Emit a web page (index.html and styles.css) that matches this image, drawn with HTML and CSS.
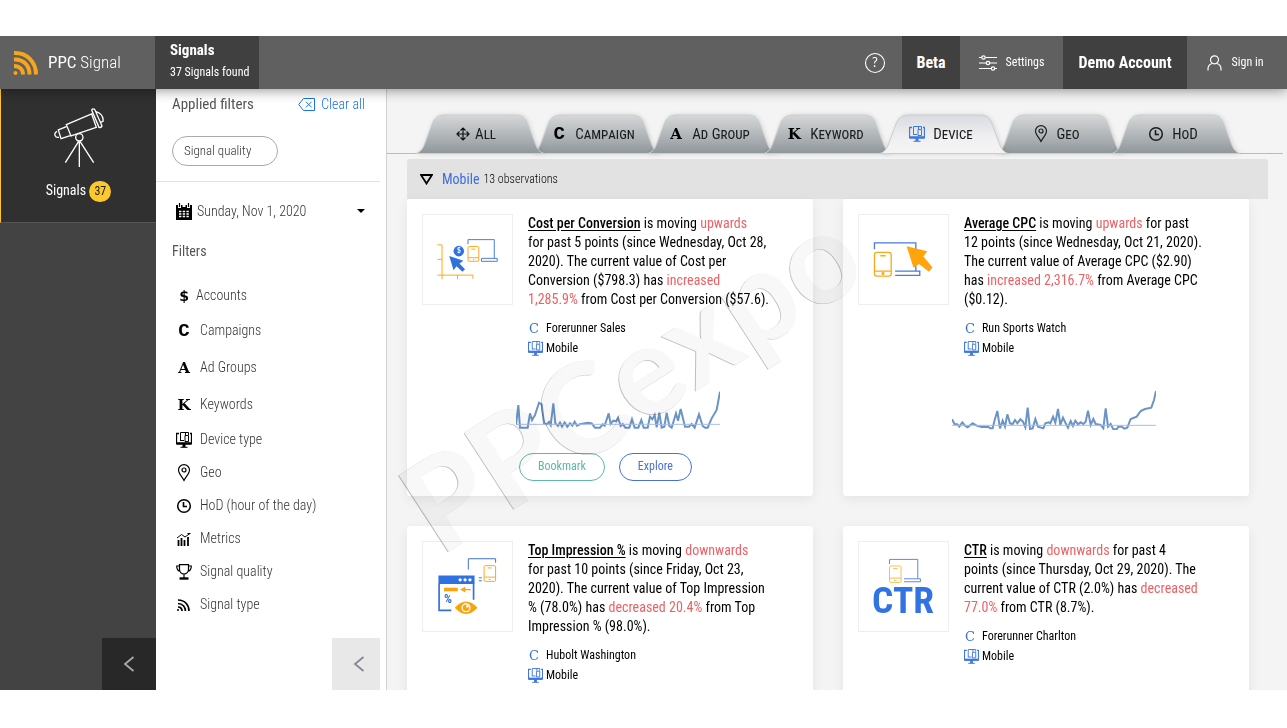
FILE: index.html
```html
<!DOCTYPE html>
<html lang="en">
<head>
<meta charset="utf-8">
<title>PPC Signal</title>
<link rel="stylesheet" href="styles.css">
</head>
<body>
<svg class="defs" aria-hidden="true">
  <defs>
    <linearGradient id="tab-fill" x1="0" y1="0" x2="0" y2="1"><stop offset="0" stop-color="#d6d8d9"/><stop offset="1" stop-color="#8f979b"/></linearGradient>
    <linearGradient id="tab-active" x1="0" y1="0" x2="0" y2="1"><stop offset="0" stop-color="#d9dbe1"/><stop offset=".6" stop-color="#f0f0f2"/><stop offset="1" stop-color="#f4f4f4"/></linearGradient>
    <symbol id="tab" viewBox="0 0 116 38" preserveAspectRatio="none" overflow="visible"><path d="M-4 38.500Q2 37 5 28L12 9Q15 0 24 0H97Q105 0 108 9L115 28Q118 37 124 38.500Z"/></symbol>
    <symbol id="device" viewBox="0 0 16 16"><g fill="none" stroke="currentColor"><path d="M3 1.500H.5V11.500H15.500V1.500H14" stroke-width="1.300"/><path d="M4.500 9V.5H9.500V3M4.500 8.500H8M9 3.500H12.500V9.500H9ZM8.500 .5H12.500V3"/><path d="M.5 11.500H15.500" stroke-width="2.400"/><path d="M8 12V15" stroke-width="3"/><path d="M4.500 15.300H11.500"/></g></symbol>
    <symbol id="pin" viewBox="0 0 14 18"><g fill="none" stroke="currentColor" stroke-width="1.200"><path d="M7 16.500C5 12.500 1.500 9.500 1.500 6a5.500 5.300 0 0 1 11 0C12.500 9.500 9 12.500 7 16.500Z"/><circle cx="7" cy="6" r="2"/></g></symbol>
    <symbol id="clock" viewBox="0 0 16 16"><circle cx="8" cy="8" r="6.300" fill="none" stroke="currentColor" stroke-width="1.500"/><path d="M7.500 4V8.500H11" fill="none" stroke="currentColor" stroke-width="1.600"/></symbol>
    <symbol id="chev" viewBox="0 0 12 18"><path d="M10.500 2 2 9l8.500 7" fill="none" stroke="currentColor" stroke-width="1.800"/></symbol>
  </defs>
</svg>

<div class="app">
  <header class="header">
    <div class="brand">
      <svg width="26" height="26" viewBox="0 0 26 26" fill="none" stroke="#f9a51a" stroke-width="4"><path d="M1 3C14 2.500 23 12 23 24.500M1 9.500C10.500 9 16.500 15.500 16.500 24.500M1 16C6.500 16 10 19.500 10 24.500"/><circle cx="2.500" cy="23" r="2" fill="#f9a51a" stroke="none"/></svg>
      <span><b>PPC</b> Signal</span>
    </div>
    <div class="page-name"><strong>Signals</strong><small>37 Signals found</small></div>
    <nav class="top-nav">
      <button class="help" aria-label="Help"><svg width="22" height="22" viewBox="0 0 22 22"><circle cx="11" cy="11" r="9.500" fill="none" stroke="#fff" stroke-width="1.100"/><text x="11" y="15" text-anchor="middle" fill="#fff" class="q">?</text></svg></button>
      <button class="dark beta">Beta</button>
      <button class="settings"><svg width="18" height="16" viewBox="0 0 18 16" fill="none" stroke="#fff" stroke-width="1.200"><path d="M0 2.500H2.500M6.500 2.500H18M0 8H7M11 8H18M0 13.500H12M16 13.500H18"/><circle cx="4.500" cy="2.500" r="1.700"/><circle cx="9" cy="8" r="1.700"/><circle cx="14" cy="13.500" r="1.700"/></svg>Settings</button>
      <button class="dark demo">Demo Account</button>
      <button class="signin"><svg width="15" height="16" viewBox="0 0 15 16" fill="none" stroke="#fff" stroke-width="1.200"><circle cx="7.500" cy="4.800" r="4"/><path d="M1 15.500V14C1 11 3 9 5.500 8.500M14 15.500V14C14 11 12 9 9.500 8.500"/></svg>Sign in</button>
    </nav>
  </header>

  <div class="body">
    <aside class="rail">
      <a class="rail-item" href="#">
        <svg width="50" height="60" viewBox="0 0 150 180" fill="none" stroke="#fff" stroke-width="4"><path d="M37 50 113 18 127 58 51 84ZM37 56 13 66 21 92 51 82M9 70C-2 76 2 90 15 88M113 6 135 58Q142 60 144 54L122 4Q116 0 113 6ZM124 10Q150 18 147 40L138 44"/><circle cx="76" cy="88" r="11"/><path d="M76 100V177M74 100 34 164M78 100 119 164"/></svg>
        <span>Signals <b class="badge">37</b></span>
      </a>
      <button class="collapse" aria-label="Collapse menu"><svg width="12" height="18"><use href="#chev"/></svg></button>
    </aside>

    <aside class="filters">
      <div class="filters-inner">
        <section class="applied">
          <div class="applied-head"><h2>Applied filters</h2>
            <button class="clear"><svg width="17" height="13" viewBox="0 0 17 13" fill="none" stroke="currentColor"><path d="M5.500.5H16.500V12.500H5.500L.7 6.500ZM8 3.800 13.500 9.300M13.500 3.800 8 9.300"/></svg>Clear all</button></div>
          <button class="pill">Signal quality</button>
        </section>
        <button class="date"><svg width="16" height="17" viewBox="0 0 16 17"><path d="M0 2H2V5H5V2H6.500V4H9.500V2H11V5H14V2H16V17H0Z"/><path d="M3.500 0V4M12.500 0V4" stroke="#000" stroke-width="1.200"/><path d="M3 8.500H13M3 11H13M3 13.500H13" stroke="#fff" stroke-width="1.500" stroke-dasharray="2.400 1.300"/></svg><span>Sunday, Nov 1, 2020</span><svg width="8" height="4" viewBox="0 0 8 4"><path d="M0 0H8L4 4Z"/></svg></button>
        <h2 class="filters-title">Filters</h2>
        <ul class="filter-list">
          <li><button class="acc"><i class="glyph dollar">$</i>Accounts</button></li>
          <li class="tall"><button><i class="glyph mono">C</i>Campaigns</button></li>
          <li class="tall"><button><i class="glyph">A</i>Ad Groups</button></li>
          <li class="tall"><button><i class="glyph">K</i>Keywords</button></li>
          <li><button><svg width="16" height="16"><use href="#device"/></svg>Device type</button></li>
          <li><button><svg width="16" height="18"><use href="#pin"/></svg>Geo</button></li>
          <li><button><svg width="16" height="16"><use href="#clock"/></svg>HoD (hour of the day)</button></li>
          <li><button><svg width="16" height="16" viewBox="0 0 16 16" fill="none" stroke="#000"><path d="M1 7 5.500 3.500 9 6 14 2.500M11.500 2.500H14.500"/><path d="M2.500 15V9M5.500 15V7M8.500 15V9M12 15V6" stroke-width="1.800"/></svg>Metrics</button></li>
          <li><button><svg width="16" height="16" viewBox="0 0 16 16" fill="none" stroke="#000" stroke-width="1.200"><path d="M3.500.7H12.500V5C12.500 8 10.500 10 8 10S3.500 8 3.500 5ZM3.500 2H.7C.7 5 2 7 4.500 7.500M12.500 2H15.300C15.300 5 14 7 11.500 7.500M8 10V14"/><path d="M3.500 14.500H12.500" stroke-width="2.400"/></svg>Signal quality</button></li>
          <li><button><svg width="16" height="16" viewBox="0 0 16 16" fill="none" stroke="#000" stroke-width="1.700"><path d="M2 3C9 3 13 8 13 14M2 6.500C6.500 6.500 9.500 10 9.500 14M2 10C4.500 10 6 11.500 6 14"/><path d="M1 13H3"/></svg>Signal type</button></li>
        </ul>
        <button class="collapse light" aria-label="Collapse filters"><svg width="12" height="18"><use href="#chev"/></svg></button>
      </div>
    </aside>

    <main class="main">
      <nav class="tabs">
        <button class="tab z3"><svg class="shape"><use href="#tab"/></svg><svg width="14" height="14" viewBox="0 0 14 14" fill="none" stroke="#111" stroke-width="1.200"><path d="M7 1V13M1 7H13M4.500 3.500 7 1 9.500 3.500M4.500 10.500 7 13 9.500 10.500M3.500 4.500 1 7 3.500 9.500M10.500 4.500 13 7 10.500 9.500"/></svg><span>All</span></button>
        <button class="tab wide"><svg class="shape"><use href="#tab"/></svg><i class="glyph mono">C</i><span>Campaign</span></button>
        <button class="tab wide z2"><svg class="shape"><use href="#tab"/></svg><i class="glyph">A</i><span>Ad Group</span></button>
        <button class="tab wide z3"><svg class="shape"><use href="#tab"/></svg><i class="glyph">K</i><span>Keyword</span></button>
        <button class="tab active wide z4"><svg class="shape"><use href="#tab"/></svg><svg class="blue" width="16" height="16"><use href="#device"/></svg><span>Device</span></button>
        <button class="tab wide"><svg class="shape"><use href="#tab"/></svg><svg width="14" height="18"><use href="#pin"/></svg><span>Geo</span></button>
        <button class="tab wide z2"><svg class="shape"><use href="#tab"/></svg><svg width="16" height="16"><use href="#clock"/></svg><span>HoD</span></button>
      </nav>

      <button class="group"><svg width="13" height="11" viewBox="0 0 13 11"><path d="M1 1H12L6.500 9.500Z" fill="none" stroke="#000" stroke-width="1.800"/></svg><b>Mobile</b><small>13 observations</small></button>

      <div class="cards">
        <article class="card">
          <div class="card-top">
            <div class="thumb"><svg viewBox="67 58 271 271" fill="none" stroke-width="3">
              <g stroke="#fba919"><path d="M111 149H125V254M111 193H125M111 241H219V252M172 241V254"/><rect x="204" y="154" width="33" height="45" rx="4"/><path d="M204 188H237M214 162H226M219 194H223"/></g>
              <g stroke="#4b7bd9"><path d="M204 147V133H284V190M245 190H293V199H245Z"/></g>
              <path d="M147 183 190 197 178 206 195 223 187 231 169 214 160 226Z" fill="#2f71e0"/><circle cx="176" cy="168" r="16" fill="#2f71e0"/><text x="176" y="175" text-anchor="middle" class="thumb-dollar">$</text></svg></div>
            <div class="card-text">
              <p><a href="#">Cost per Conversion</a> is moving <em>upwards</em><br>for past 5 points (since Wednesday, Oct 28,<br>2020). The current value of Cost per<br>Conversion ($798.3) has <em>increased</em><br><em>1,285.9%</em> from Cost per Conversion ($57.6).</p>
              <ul class="meta"><li><i class="c">C</i>Forerunner Sales</li><li><svg class="blue" width="15" height="15"><use href="#device"/></svg>Mobile</li></ul>
            </div>
          </div>
          <svg class="spark" viewBox="348 90 612 120" fill="none"><path d="M348 195 355 135 360 203 383 203 390 160 396 180 405 165 417 128 425 133 432 190 440 193 447 186 452 195 460 130 466 190 474 198 480 188 486 200 494 187 502 200 510 190 517 197 524 185 531 197 540 193 555 190 565 188 575 190 585 203 600 203 608 193 614 197 626 160 632 192 640 182 648 184 654 173 662 198 668 192 676 203 688 203 696 178 704 203 715 203 724 180 731 203 743 203 750 170 757 178 764 165 770 202 778 158 785 203 793 200 800 158 808 198 815 203 828 160 834 182 842 147 855 200 867 200 875 192 884 203 897 163 908 198 915 203 923 203 935 175 950 150 960 95" stroke="#6a94c6" stroke-width="6"/><path d="M348 193H960" stroke="#a9bbe8" stroke-width="3"/></svg>
          <div class="actions"><button class="bookmark">Bookmark</button><button class="explore">Explore</button></div>
        </article>

        <article class="card">
          <div class="card-top">
            <div class="thumb"><svg viewBox="85 58 271 271" fill="none" stroke-width="4">
              <path d="M132 162V143H258V230M195 229H270V242H195" stroke="#4b7bd9"/>
              <g stroke="#fba919"><rect x="132" y="172" width="51" height="72" rx="7"/><path d="M132 229H183M150 182H166"/><circle cx="158" cy="236" r="3"/></g>
              <path d="M230 153 293 168 281 184 309 218 298 231 268 207 251 219Z" fill="#ffa40b"/></svg></div>
            <div class="card-text">
              <p><a href="#">Average CPC</a> is moving <em>upwards</em> for past<br>12 points (since Wednesday, Oct 21, 2020).<br>The current value of Average CPC ($2.90)<br>has <em>increased 2,316.7%</em> from Average CPC<br>($0.12).</p>
              <ul class="meta"><li><i class="c">C</i>Run Sports Watch</li><li><svg class="blue" width="15" height="15"><use href="#device"/></svg>Mobile</li></ul>
            </div>
          </div>
          <svg class="spark" viewBox="366 90 612 120" fill="none"><path d="M366 178 374 193 382 193 388 200 397 187 405 197 413 202 428 190 440 197 455 201 475 200 480 205 488 205 494 180 502 153 510 205 518 182 525 200 532 163 540 190 548 192 555 180 562 190 571 178 579 185 586 202 593 143 600 207 608 205 616 177 624 200 640 205 646 190 656 187 661 190 669 170 676 188 684 147 691 195 699 173 707 190 714 203 722 183 729 198 736 182 744 193 752 187 760 192 767 185 774 152 782 195 790 177 797 192 812 195 820 205 827 145 834 200 842 192 850 208 860 208 865 200 875 200 883 206 892 203 902 177 920 170 932 153 945 147 964 143 972 120 978 93" stroke="#6a94c6" stroke-width="6"/><path d="M366 196H978" stroke="#a9bbe8" stroke-width="3"/></svg>
        </article>

        <article class="card">
          <div class="card-top">
            <div class="thumb"><svg viewBox="67 64 271 271" fill="none" stroke-width="3">
              <path d="M205 148V115H288V127M237 173H246M237 182H246" stroke="#3f6fce"/>
              <g stroke="#fba919"><rect x="253" y="136" width="35" height="48" rx="4"/><path d="M253 171H288M264 143H276M267 178H273"/></g>
              <path d="M116 190V272H153M221 190V240" stroke="#2f6fe0" stroke-width="5"/><path d="M114 166H224V192H114Z" fill="#2f71e0"/>
              <g fill="#fff"><circle cx="180" cy="179" r="5"/><circle cx="195" cy="179" r="5"/><circle cx="210" cy="179" r="5"/></g>
              <path d="M131 203H173V214H131ZM180 209 196 200V207H213V211H196V218Z" fill="#fba30a"/><text x="131" y="251" class="thumb-pct">%</text>
              <path d="M164 264Q198 226 233 264Q198 302 164 264Z" fill="#fba30a"/><circle cx="198" cy="264" r="12" stroke="#fff" stroke-width="4"/><circle cx="202" cy="260" r="4" fill="#fff"/></svg></div>
            <div class="card-text">
              <p><a href="#">Top Impression %</a> is moving <em>downwards</em><br>for past 10 points (since Friday, Oct 23,<br>2020). The current value of Top Impression<br>% (78.0%) has <em>decreased 20.4%</em> from Top<br>Impression % (98.0%).</p>
              <ul class="meta"><li><i class="c">C</i>Hubolt Washington</li><li><svg class="blue" width="15" height="15"><use href="#device"/></svg>Mobile</li></ul>
            </div>
          </div>
        </article>

        <article class="card">
          <div class="card-top">
            <div class="thumb"><svg viewBox="85 64 271 271" fill="none" stroke-width="3">
              <path d="M178 131V117H264V176M222 176H272V185H222" stroke="#5f86d8"/>
              <g stroke="#f8bd55"><rect x="178" y="137" width="35" height="50" rx="4"/><path d="M178 174H213M189 145H202M192 181H199"/></g>
              <text x="219" y="280" text-anchor="middle" class="thumb-ctr">CTR</text></svg></div>
            <div class="card-text">
              <p><a href="#">CTR</a> is moving <em>downwards</em> for past 4<br>points (since Thursday, Oct 29, 2020). The<br>current value of CTR (2.0%) has <em>decreased</em><br><em>77.0%</em> from CTR (8.7%).</p>
              <ul class="meta"><li><i class="c">C</i>Forerunner Charlton</li><li><svg class="blue" width="15" height="15"><use href="#device"/></svg>Mobile</li></ul>
            </div>
          </div>
        </article>
      </div>
      <div class="watermark" aria-hidden="true">PPCexpo</div>
    </main>
  </div>
</div>
</body>
</html>
```
FILE: styles.css
```css
* { box-sizing: border-box; }
body { margin: 0; padding: 36px 0 38px; background: #fff; color: #000; font: 14px/19px "Roboto Condensed", Roboto, sans-serif; }
button { border: 0; padding: 0; margin: 0; background: none; font: inherit; color: inherit; cursor: pointer; white-space: nowrap; }
ul { list-style: none; margin: 0; padding: 0; }
h2, p { margin: 0; }
svg { flex: none; }
.defs { position: absolute; width: 0; height: 0; }
.app { height: calc(100vh - 74px); overflow: hidden; display: flex; flex-direction: column; }

.header { position: relative; z-index: 5; display: flex; height: 53px; flex: none; background: #606060; color: #fff; box-shadow: 0 1px 12px rgba(0, 0, 0, .45); }
.brand { width: 155px; padding-left: 13px; display: flex; align-items: center; gap: 9px; font-size: 17px; font-weight: 300; }
.page-name { width: 104px; padding: 5px 0 0 15px; background: #404040; display: flex; flex-direction: column; gap: 3px; }
.page-name strong { font-size: 15px; }
.page-name small { font-size: 12px; white-space: nowrap; }
.top-nav { margin-left: auto; display: flex; }
.top-nav button { display: flex; align-items: center; justify-content: center; gap: 9px; font-size: 12px; }
.top-nav .help { width: 54px; }
.top-nav .dark { background: #404040; font-size: 16px; font-weight: 700; }
.top-nav .beta { width: 58px; }
.top-nav .settings { width: 103px; }
.top-nav .demo { width: 124px; }
.top-nav .signin { width: 100px; padding-right: 3px; }
.q { font: 13px Lato, sans-serif; }

.body { flex: 1; min-height: 0; display: flex; }
.rail { width: 156px; flex: none; background: #434343; display: flex; flex-direction: column; justify-content: space-between; align-items: flex-end; }
.rail-item { width: 100%; height: 134px; padding-top: 19px; background: #303030; border-left: 1px solid #fcc52b; border-bottom: 1px solid #555; color: #fff; text-decoration: none; display: flex; flex-direction: column; align-items: center; gap: 13px; }
.badge { display: inline-block; width: 22px; line-height: 21px; border-radius: 11px; background: #fcc82c; color: #222; text-align: center; font-weight: 400; font-size: 12px; }
.collapse { width: 54px; height: 52px; background: #282828; color: #aaa; display: flex; align-items: center; justify-content: center; }
.collapse.light { width: 48px; margin-top: auto; margin-left: auto; padding-left: 6px; background: #e8e8e8; color: #858891; }

.filters { width: 231px; flex: none; padding-right: 6px; background: #fff; border-right: 1px solid #d0d0d0; color: #333; font-weight: 300; }
.filters-inner { height: 100%; display: flex; flex-direction: column; }
.filters h2 { font-size: 15px; font-weight: 400; color: #555; }
.applied { padding: 6px 15px 15px 16px; border-bottom: 1px solid #e2e2e2; }
.applied-head { display: flex; justify-content: space-between; margin-bottom: 22px; }
.clear { display: flex; align-items: center; gap: 6px; color: #1a73e8; }
.pill { height: 30px; width: 106px; padding: 0 0 2px 11px; border: 1px solid #aaa; border-radius: 15px; text-align: left; font-size: 13px; }
.date { display: flex; align-items: center; height: 58px; padding: 0 15px 0 20px; gap: 5px; }
.date span { flex: 1; text-align: left; }
.filters .filters-title { padding: 2px 16px 0; font-size: 14px; }
.filter-list { padding: 18px 0 0 20px; }
.filter-list li, .filter-list button { display: flex; align-items: center; height: 33px; }
.filter-list .tall, .filter-list .tall button { height: 37px; }
.filter-list button { gap: 8px; }
.filter-list button.acc { gap: 4px; }
.filter-list svg { color: #000; }
.glyph { font: 700 15px/18px "DejaVu Serif", serif; color: #000; width: 16px; flex: none; text-align: center; }
.glyph.mono { font: 700 19px/18px "Liberation Mono", monospace; }
.glyph.dollar { font: 700 14px/18px "DejaVu Sans", sans-serif; }

.main { position: relative; flex: 1; min-width: 0; background: #f4f4f4; }
.tabs { margin: 0 4px 0 0; padding: 26px 0 0 33px; display: flex; border-bottom: 1px solid #b6bcbf; }
.tab { position: relative; width: 116px; height: 38px; padding-right: 4px; display: flex; align-items: center; justify-content: center; gap: 5px; font-size: 15px; font-variant: small-caps; color: #1c1c1c; }
.tab.wide { gap: 8px; padding-right: 2px; }
.tab > * { position: relative; }
.tab .shape { position: absolute; inset: 0; width: 100%; height: 100%; overflow: visible; fill: url(#tab-fill); stroke: #c9cecf; filter: drop-shadow(1px 0 2px rgba(0, 0, 0, .12)); }
.tab.active .shape { fill: url(#tab-active); }
.z2 { z-index: 1; } .z3 { z-index: 2; } .z4 { z-index: 3; }
.blue { color: #3f78dd; }
.group { margin: 5px 19px 0 20px; width: calc(100% - 39px); height: 40px; padding-left: 13px; background: #e2e2e2; border-radius: 3px 3px 0 0; display: flex; align-items: center; gap: 9px; }
.group b { font-weight: 400; color: #3c6be0; }
.group small { font-size: 12px; font-weight: 300; margin-left: -5px; }

.cards { margin: 0 38px 0 20px; display: grid; grid-template-columns: 1fr 1fr; gap: 30px; }
.card { background: #fff; min-height: 297px; padding: 15px; border-radius: 3px; box-shadow: 0 3px 12px rgba(0, 0, 0, .07); display: flex; flex-direction: column; }
.card-top { display: flex; gap: 15px; }
.thumb { width: 91px; height: 91px; flex: none; border: 1px solid #eee; }
.thumb svg { display: block; width: 100%; height: 100%; }
.thumb-dollar { font: 700 20px Lato, sans-serif; fill: #fff; }
.thumb-pct { font: 700 38px "Roboto Condensed", Roboto, sans-serif; fill: #2f71e0; }
.thumb-ctr { font: 700 114px "Roboto Condensed", Roboto, sans-serif; fill: #3273e3; }
.card-text p { white-space: nowrap; }
.card-text a { color: #000; font-weight: 500; text-underline-offset: 2px; }
.card-text em { font-style: normal; color: #ee6165; }
.meta { margin-top: 9px; font-size: 12px; }
.meta li { height: 20px; display: flex; align-items: center; gap: 3px; }
.meta .c { width: 15px; padding-right: 3px; text-align: center; font: 13px "DejaVu Serif", serif; color: #3a6fdd; }
.spark { width: 204px; height: 40px; margin: 32px 0 0 94px; }
.actions { display: flex; gap: 14px; margin: 23px 0 0 97px; }
.actions button { height: 28px; padding: 0 18px 2px; border: 1px solid; border-radius: 14px; font-size: 12px; }
.bookmark { color: #5cb8ab; }
.explore { color: #4a6fd8; }
.watermark { position: absolute; left: 27px; top: 428px; line-height: 0; font-family: Lato, sans-serif; font-size: 126px; font-weight: 700; color: #f8f8f8; text-shadow: -1px 0 #bdbdbd; transform-origin: 0 0; transform: rotate(-33deg); mix-blend-mode: multiply; pointer-events: none; z-index: 4; }
```
